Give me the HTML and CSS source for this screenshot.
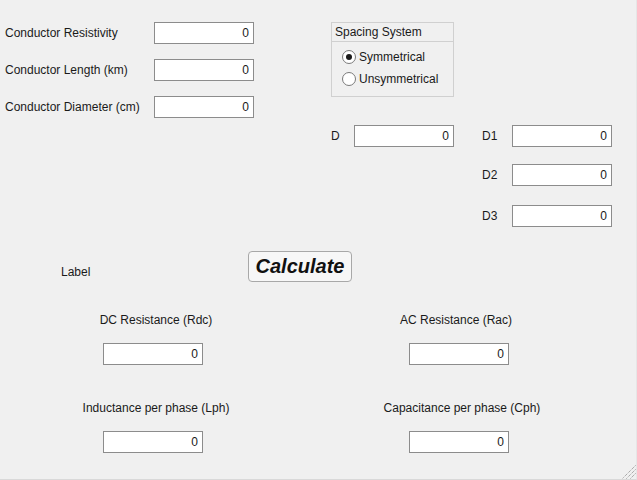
FILE: index.html
```html
<!DOCTYPE html>
<html>
<head>
<meta charset="utf-8">
<link rel="stylesheet" href="styles.css">
</head>
<body>
<div class="app">
  <div class="top">
    <div class="params">
      <div class="prow"><span class="plabel">Conductor Resistivity</span><input class="field" value="0"></div>
      <div class="prow"><span class="plabel">Conductor Length (km)</span><input class="field" value="0"></div>
      <div class="prow"><span class="plabel">Conductor Diameter (cm)</span><input class="field" value="0"></div>
    </div>
    <div class="panel">
      <div class="panel-title">Spacing System</div>
      <div class="panel-body">
        <div class="radio"><span class="dot on"></span><span>Symmetrical</span></div>
        <div class="radio"><span class="dot"></span><span>Unsymmetrical</span></div>
      </div>
    </div>
  </div>

  <div class="dist">
    <span class="dlabel">D</span><input class="field" value="0">
    <span></span>
    <span class="dlabel">D1</span><input class="field" value="0">
    <span></span><span></span><span></span>
    <span class="dlabel">D2</span><input class="field" value="0">
    <span></span><span></span><span></span>
    <span class="dlabel">D3</span><input class="field" value="0">
  </div>

  <div class="action">
    <span class="label">Label</span>
    <button class="calc">Calculate</button>
  </div>

  <div class="results">
    <div class="cell"><span class="rlabel shift-r">DC Resistance (Rdc)</span><input class="field" value="0"></div>
    <div class="cell"><span class="rlabel shift-l">AC Resistance (Rac)</span><input class="field" value="0"></div>
    <div class="cell"><span class="rlabel shift-r">Inductance per phase (Lph)</span><input class="field" value="0"></div>
    <div class="cell"><span class="rlabel shift-r">Capacitance per phase (Cph)</span><input class="field" value="0"></div>
  </div>

  <svg class="grip" width="16" height="16" viewBox="0 0 16 16">
    <g stroke="#8a8a8a" stroke-width="1" stroke-dasharray="1 1">
      <line x1="15.5" y1="2.5" x2="2.5" y2="15.5"/>
      <line x1="15.5" y1="6.5" x2="6.5" y2="15.5"/>
      <line x1="15.5" y1="10.5" x2="10.5" y2="15.5"/>
    </g>
  </svg>
</div>
</body>
</html>
```

FILE: styles.css
```css
html, body {
  margin: 0;
  padding: 0;
  background: #f0f0f0;
}
.app {
  position: relative;
  width: 637px;
  height: 480px;
  box-sizing: border-box;
  border-bottom: 1px solid #d9d9d9;
  border-right: 1px solid #e6e6e6;
  font-family: "Liberation Sans", Arial, sans-serif;
  font-size: 12px;
  color: #1a1a1a;
  overflow: hidden;
}
.field {
  box-sizing: border-box;
  width: 100px;
  height: 22px;
  border: 1px solid #8c8c8c;
  background: #fff;
  font-family: "Liberation Sans", Arial, sans-serif;
  font-size: 12px;
  color: #1a1a1a;
  text-align: right;
  padding: 0 4px 0 0;
  margin: 0;
  outline: none;
}
.top {
  display: flex;
  align-items: flex-start;
  padding-top: 22px;
}
.params {
  display: flex;
  flex-direction: column;
  gap: 15px;
  margin-left: 5px;
}
.prow {
  display: flex;
  align-items: center;
  height: 22px;
}
.plabel {
  width: 149px;
}
.panel {
  margin-left: 77px;
  width: 123px;
  height: 75px;
  box-sizing: border-box;
  border: 1px solid #d0d0d0;
}
.panel-title {
  height: 18px;
  line-height: 19px;
  padding-left: 3px;
  border-bottom: 1px solid #d0d0d0;
}
.panel-body {
  display: flex;
  flex-direction: column;
  gap: 9px;
  padding: 8px 0 0 10px;
}
.radio {
  display: flex;
  align-items: center;
  gap: 3px;
  height: 13px;
}
.dot {
  box-sizing: border-box;
  width: 14px;
  height: 14px;
  border-radius: 50%;
  border: 1px solid #7a7a7a;
  background: #fff;
  display: flex;
  align-items: center;
  justify-content: center;
}
.dot.on::after {
  content: "";
  width: 6px;
  height: 6px;
  border-radius: 50%;
  background: #1a1a1a;
}
.dist {
  display: grid;
  grid-template-columns: 23px 100px 28px 30px 100px;
  grid-template-rows: 39px 41px 22px;
  align-items: start;
  margin-top: 7px;
  margin-left: 331px;
}
.dlabel {
  height: 22px;
  line-height: 22px;
}
.action {
  display: flex;
  align-items: center;
  margin-top: 24px;
  padding-left: 61px;
}
.label {
  width: 187px;
  margin-top: 10px;
}
.calc {
  box-sizing: border-box;
  width: 104px;
  height: 31px;
  border: 1px solid #a8a8a8;
  border-radius: 4px;
  background: #f7f7f7;
  font-family: "Liberation Sans", Arial, sans-serif;
  font-size: 20px;
  font-weight: bold;
  font-style: italic;
  color: #111;
  padding: 0;
}
.results {
  display: grid;
  grid-template-columns: 200px 200px;
  column-gap: 106px;
  row-gap: 36px;
  margin-top: 31px;
  margin-left: 53px;
}
.cell {
  display: flex;
  flex-direction: column;
  align-items: center;
  gap: 16px;
}
.rlabel {
  height: 14px;
  line-height: 14px;
}
.shift-r {
  margin-left: 6px;
}
.shift-l {
  margin-right: 6px;
}
.grip {
  position: absolute;
  right: 0;
  bottom: 0;
}
```
